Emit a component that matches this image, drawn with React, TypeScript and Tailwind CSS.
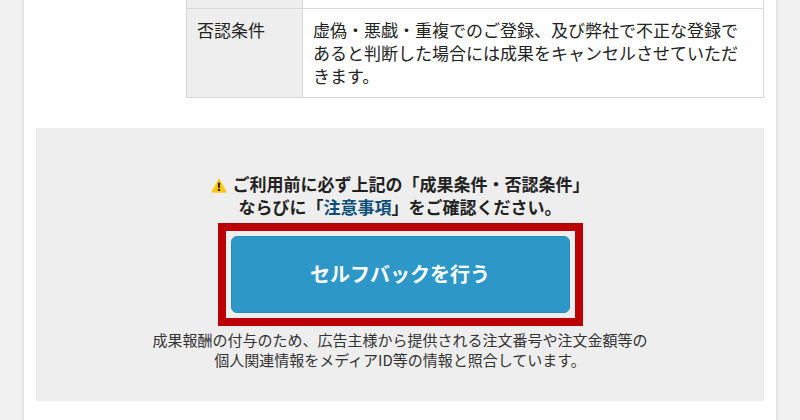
import React from "react";

function WarningIcon() {
  return (
    <svg viewBox="0 0 16 15" className="mr-1.5 inline-block h-[15px] w-4 align-[-2px]" aria-hidden="true">
      <path d="M8 0.8 L15.4 14.2 H0.6 Z" fill="#fdc50b" stroke="#fbc81c" strokeWidth="0.8" strokeLinejoin="round" />
      <path d="M6.8 4.8 H9.2 L8.8 10.2 H7.2 Z" fill="#2b2412" />
      <rect x="6.9" y="11" width="2.2" height="2" rx="0.6" fill="#2b2412" />
    </svg>
  );
}

function ConditionTable() {
  return (
    <table className="ml-auto w-[578px] max-w-full border-collapse text-left text-[17px] leading-[23px]">
      <tbody>
        <tr className="h-2">
          <th className="w-29 border-x border-[#d8d8d8] bg-[#eee] p-0" />
          <td className="border-x border-[#d8d8d8] p-0" />
        </tr>
        <tr>
          <th scope="row" className="border border-[#d8d8d8] bg-[#eee] px-2.5 pt-[9px] pb-2.5 align-top font-normal">
            否認条件
          </th>
          <td className="border border-[#d8d8d8] px-2.5 pt-[9px] pb-2.5 align-top">
            虚偽・悪戯・重複でのご登録、及び弊社で不正な登録で
            <br />
            あると判断した場合には成果をキャンセルさせていただ
            <br />
            きます。
          </td>
        </tr>
      </tbody>
    </table>
  );
}

export default function App() {
  return (
    <div className="min-h-screen bg-[#f1f1f1] px-[22px] font-['Noto_Sans_CJK_JP','Liberation_Sans',sans-serif] text-[#222]">
      <main className="min-h-screen border-x-2 border-[#e6e6e6] bg-white px-3 pb-[19px]">
        <ConditionTable />
        <section className="mt-[30px] flex flex-col items-center bg-[#eee] pt-11 pb-[31px] text-center">
          <p className="text-[17px] leading-[23px] font-bold">
            <WarningIcon />
            ご利用前に必ず上記の「成果条件・否認条件」
            <br />
            ならびに「
            <a href="#notes" className="text-[#0b4f78]">
              注意事項
            </a>
            」をご確認ください。
          </p>
          <div className="mt-[5px] w-[365px] max-w-full border-8 border-[#ba0000] p-[5px]">
            <button
              type="button"
              className="h-[77px] w-full rounded-md border border-[#258dbd] bg-[#2d98c8] text-xl font-bold text-white"
            >
              セルフバックを行う
            </button>
          </div>
          <p className="mt-1 text-[15px] leading-5 text-[#333]">
            成果報酬の付与のため、広告主様から提供される注文番号や注文金額等の
            <br />
            個人関連情報をメディアID等の情報と照合しています。
          </p>
        </section>
      </main>
    </div>
  );
}
